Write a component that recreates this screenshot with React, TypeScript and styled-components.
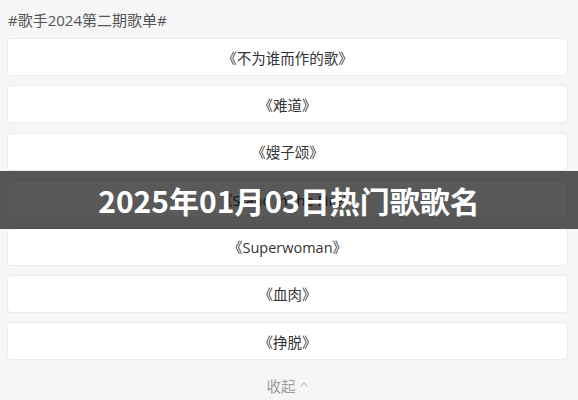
import React from 'react';
import styled, { createGlobalStyle } from 'styled-components';

const songs = [
  '《不为谁而作的歌》',
  '《难道》',
  '《嫂子颂》',
  '《Stand in the Fire》',
  '《Superwoman》',
  '《血肉》',
  '《挣脱》',
];

export default function App() {
  return (
    <Page>
      <GlobalStyle />
      <Topic>#歌手2024第二期歌单#</Topic>
      <SongList>
        {songs.map((song) => (
          <SongCard key={song}>{song}</SongCard>
        ))}
      </SongList>
      <Collapse>
        收起
        <svg width="10" height="10" viewBox="0 0 10 10">
          <path d="M1.5 6.5 L5 3 L8.5 6.5" fill="none" stroke="#b0b0b0" strokeWidth="1" />
        </svg>
      </Collapse>
      <Banner>
        <BannerTitle>2025年01月03日热门歌歌名</BannerTitle>
      </Banner>
    </Page>
  );
}

const GlobalStyle = createGlobalStyle`
  html, body {
    margin: 0;
    padding: 0;
    background: #f6f6f6;
  }
`;

const Page = styled.div`
  position: relative;
  width: 578px;
  height: 400px;
  overflow: hidden;
  padding: 0 10px 0 7px;
  box-sizing: border-box;
  background: #f6f6f6;
  font-family: 'Open Sans', 'Noto Sans CJK SC', sans-serif;
`;

const Topic = styled.div`
  height: 38px;
  display: flex;
  align-items: center;
  padding-left: 1px;
  font-size: 15px;
  color: #555;
`;

const SongList = styled.div`
  display: flex;
  flex-direction: column;
  gap: 9.4px;
`;

const SongCard = styled.div`
  height: 38px;
  box-sizing: border-box;
  display: flex;
  align-items: center;
  justify-content: center;
  background: #fff;
  border: 1px solid #ebebeb;
  border-radius: 4px;
  font-size: 14.5px;
  color: #333;
`;

const Collapse = styled.div`
  height: 50px;
  display: flex;
  align-items: center;
  justify-content: center;
  gap: 3px;
  font-size: 14.5px;
  color: #9a9a9a;
`;

const Banner = styled.div`
  position: absolute;
  left: 0;
  right: 0;
  top: 171px;
  height: 58px;
  display: flex;
  align-items: center;
  justify-content: center;
  background: rgba(0, 0, 0, 0.65);
`;

const BannerTitle = styled.div`
  font-family: 'Noto Sans CJK SC', sans-serif;
  font-weight: 700;
  font-size: 30px;
  color: #fff;
`;
